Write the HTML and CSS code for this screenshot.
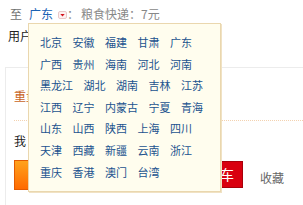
FILE: index.html
```html
<!DOCTYPE html>
<html>
<head>
<meta charset="utf-8">
<link rel="stylesheet" href="styles.css">
</head>
<body>
<div class="page">
  <div class="line1">
    <span class="to">至</span><a class="prov">广东</a><span class="arrow"><svg width="9" height="8" viewBox="0 0 9 8"><rect x="0.5" y="0.5" width="8" height="7" rx="1.5" fill="#fdf0f0" stroke="#e8c8c8"/><path d="M2.3 3 L6.7 3 L4.5 5.6 Z" fill="#d4141e"/></svg></span><span class="colon">：</span><span class="fee">粮食快递：7元</span>
  </div>
  <div class="line2">用户</div>
  <div class="box">
    <div class="weight"><span class="wt">重量</span></div>
    <div class="me">我</div>
    <div class="actions">
      <span class="btn buy">立即购买</span>
      <span class="btn cart">加入购物车</span>
      <span class="fav">收藏</span>
    </div>
  </div>
  <div class="dropdown">
    <a>北京</a><a>安徽</a><a>福建</a><a>甘肃</a><a>广东</a>
    <a>广西</a><a>贵州</a><a>海南</a><a>河北</a><a>河南</a>
    <a>黑龙江</a><a>湖北</a><a>湖南</a><a>吉林</a><a>江苏</a>
    <a>江西</a><a>辽宁</a><a>内蒙古</a><a>宁夏</a><a>青海</a>
    <a>山东</a><a>山西</a><a>陕西</a><a>上海</a><a>四川</a>
    <a>天津</a><a>西藏</a><a>新疆</a><a>云南</a><a>浙江</a>
    <a>重庆</a><a>香港</a><a>澳门</a><a>台湾</a>
  </div>
</div>
</body>
</html>
```
FILE: styles.css
```css
html, body {
  margin: 0;
  padding: 0;
  background: #fff;
}
body {
  font-family: "Noto Sans CJK SC", "Liberation Sans", sans-serif;
  font-size: 12px;
  color: #333;
  width: 303px;
  height: 205px;
  overflow: hidden;
}
.page {
  position: relative;
  height: 205px;
}
.line1 {
  height: 28px;
  line-height: 28px;
  padding-left: 10px;
  color: #777;
  white-space: nowrap;
  display: flex;
  align-items: center;
}
.to { color: #707070; }
.prov {
  color: #1a62b4;
  margin-left: 7px;
}
.arrow {
  display: inline-flex;
  margin-left: 5px;
  margin-top: 2px;
}
.colon {
  color: #888;
  width: 12px;
}
.fee {
  color: #888;
  margin-left: 2px;
}
.line2 {
  height: 16px;
  line-height: 16px;
  padding-left: 8px;
  color: #222;
}
.box {
  margin-top: 23px;
  margin-left: 5px;
  border-top: 1px solid #ececec;
  border-left: 1px solid #ececec;
  height: 140px;
}
.weight {
  margin-left: 8px;
  height: 52px;
  border-bottom: 1px dotted #f3d2b0;
  display: flex;
  align-items: center;
}
.wt {
  color: #c8641e;
  margin-top: 2px;
}
.me {
  padding-left: 8px;
  height: 39px;
  line-height: 39px;
  color: #222;
}
.actions {
  display: flex;
  align-items: flex-start;
  padding-left: 8px;
}
.btn {
  color: #fff;
  font-size: 14px;
  text-align: center;
}
.buy {
  width: 116px;
  background: linear-gradient(to bottom, #ffa21c, #ff6a00);
  border: 1px solid #e35a00;
  height: 28px;
  line-height: 28px;
}
.cart {
  margin-left: 6px;
  margin-top: 1px;
  background: #d9000f;
  border: 1px solid #a8000a;
  text-align: right;
  padding-right: 8px;
  box-sizing: border-box;
  width: 105px;
  height: 27px;
  line-height: 25px;
}
.fav {
  margin-left: 17px;
  line-height: 36px;
  color: #666;
}
.dropdown {
  position: absolute;
  left: 28px;
  top: 23px;
  width: 170px;
  padding: 8px 10px 8px 11px;
  background: #fffdee;
  border: 1px solid #ead7ae;
  box-shadow: 1px 1px 0 #f0e2c4;
  display: flex;
  flex-wrap: wrap;
  column-gap: 10.5px;
  font-size: 11px;
  line-height: 21.6px;
}
.dropdown a {
  color: #22538f;
  white-space: nowrap;
}
```
